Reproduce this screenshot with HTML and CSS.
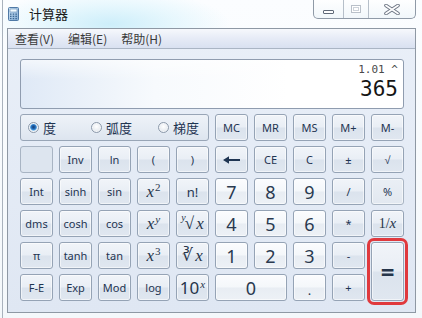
FILE: index.html
```html
<!DOCTYPE html>
<html lang="zh">
<head>
<meta charset="utf-8">
<title>计算器</title>
<link rel="stylesheet" href="styles.css">
</head>
<body>
<div class="window">
  <header class="titlebar">
    <svg class="appicon" width="11" height="14" viewBox="0 0 11 14">
      <defs><linearGradient id="ig" x1="0" y1="0" x2="1" y2="1"><stop offset="0" stop-color="#d9ecfb"/><stop offset="1" stop-color="#7fa9d3"/></linearGradient></defs>
      <rect x="0.5" y="0.5" width="10" height="13" rx="1" fill="url(#ig)" stroke="#4f79a6"/>
      <rect x="2" y="2" width="7" height="3" fill="#f4fbff" stroke="#5f87b1" stroke-width="0.6"/>
      <g fill="#3d6894">
        <rect x="2" y="6.5" width="1.5" height="1.3"/><rect x="4.7" y="6.5" width="1.5" height="1.3"/><rect x="7.4" y="6.5" width="1.5" height="1.3"/>
        <rect x="2" y="8.7" width="1.5" height="1.3"/><rect x="4.7" y="8.7" width="1.5" height="1.3"/><rect x="7.4" y="8.7" width="1.5" height="1.3"/>
        <rect x="2" y="10.9" width="1.5" height="1.3"/><rect x="4.7" y="10.9" width="1.5" height="1.3"/><rect x="7.4" y="10.9" width="1.5" height="1.3"/>
      </g>
    </svg>
    <span class="title">计算器</span>
    <div class="caption">
      <span class="cap cap-min"><i class="glyph-min"></i></span>
      <span class="cap cap-max"><i class="glyph-max"></i></span>
      <span class="cap cap-close">
        <svg width="16" height="11" viewBox="0 0 16 11">
          <path d="M2 1.5 L14 9.5 M14 1.5 L2 9.5" stroke="#6b7482" stroke-width="3.6" stroke-linecap="round"/>
          <path d="M2 1.5 L14 9.5 M14 1.5 L2 9.5" stroke="#fdfdfe" stroke-width="1.8" stroke-linecap="round"/>
        </svg>
      </span>
    </div>
  </header>
  <div class="client">
    <nav class="menubar">
      <span>查看(V)</span><span>编辑(E)</span><span>帮助(H)</span>
    </nav>
    <main class="content">
      <div class="display">
        <div class="expr">1.01 ^</div>
        <div class="value">365</div>
      </div>
      <div class="keypad">
        <div class="radios">
          <label class="radio"><span class="rb on"></span>度</label>
          <label class="radio"><span class="rb"></span>弧度</label>
          <label class="radio"><span class="rb"></span>梯度</label>
        </div>
        <div class="k">MC</div><div class="k">MR</div><div class="k">MS</div><div class="k">M+</div><div class="k">M-</div>

        <div class="k blank"></div><div class="k">Inv</div><div class="k">ln</div><div class="k">(</div><div class="k">)</div>
        <div class="k"><svg width="17" height="8" viewBox="0 0 17 8"><path d="M0 4 L6 0.3 L6 2.9 L17 2.9 L17 5.1 L6 5.1 L6 7.7 Z" fill="#1f3552"/></svg></div>
        <div class="k">CE</div><div class="k">C</div><div class="k">±</div><div class="k">√</div>

        <div class="k">Int</div><div class="k">sinh</div><div class="k">sin</div><div class="k m"><span><i>x</i><sup>2</sup></span></div><div class="k big2">n!</div>
        <div class="k num">7</div><div class="k num">8</div><div class="k num">9</div><div class="k">/</div><div class="k flat">%</div>

        <div class="k">dms</div><div class="k">cosh</div><div class="k">cos</div><div class="k m"><span><i>x</i><sup><i>y</i></sup></span></div><div class="k m"><span><sup class="pre"><i>y</i></sup>√<i class="rx">x</i></span></div>
        <div class="k num">4</div><div class="k num">5</div><div class="k num">6</div><div class="k">*</div><div class="k m small"><span>1/<i>x</i></span></div>

        <div class="k">π</div><div class="k">tanh</div><div class="k">tan</div><div class="k m"><span><i>x</i><sup>3</sup></span></div><div class="k m"><span>∛<i class="rx">x</i></span></div>
        <div class="k num">1</div><div class="k num">2</div><div class="k num">3</div><div class="k">-</div>
        <div class="k eq">=</div>

        <div class="k">F-E</div><div class="k">Exp</div><div class="k">Mod</div><div class="k">log</div><div class="k ten"><span>10<sup><i>x</i></sup></span></div>
        <div class="k num zero">0</div><div class="k num dot">.</div><div class="k">+</div>
      </div>
    </main>
  </div>
</div>
</body>
</html>
```
FILE: styles.css
```css
* { box-sizing: border-box; margin: 0; padding: 0; }
html, body { width: 422px; height: 318px; overflow: hidden; }
body {
  background: #ffffff;
  font-family: "Noto Sans", "Noto Sans CJK SC", sans-serif;
  color: #1f3552;
}

.window {
  width: 422px;
  height: 318px;
  padding: 0 6px 0 7px;
  background:
    linear-gradient(to right, transparent 2px, #a9b2bd 2px, #a9b2bd 3px, transparent 3px),
    radial-gradient(ellipse 120px 34px at 110px 24px, #cdeefa 0%, rgba(215,243,252,0.55) 55%, rgba(255,255,255,0) 100%),
    linear-gradient(#fbfdff, #f4f8fb);
}

/* ---------- title bar ---------- */
.titlebar {
  height: 28px;
  display: flex;
  align-items: flex-start;
}
.appicon { margin: 7px 0 0 1px; flex: none; }
.title {
  margin: 5px 0 0 10px;
  font: 13px/18px "Noto Sans CJK SC", sans-serif;
  color: #1b1b1b;
}
.caption {
  margin-left: auto;
  display: flex;
  height: 19px;
  border: 1px solid #8f9aa7;
  border-top: none;
  border-radius: 0 0 5px 5px;
  background: linear-gradient(rgba(255,255,255,0.7), rgba(240,246,250,0.85));
  overflow: hidden;
}
.cap {
  display: flex;
  align-items: center;
  justify-content: center;
}
.cap-min { width: 29px; }
.cap-max { width: 25px; border-left: 1px solid #b6bfc9; }
.cap-close { width: 47px; border-left: 1px solid #b6bfc9; }
.glyph-min {
  display: block;
  width: 11px;
  height: 4px;
  margin-top: 6px;
  border: 1px solid #5f6977;
  border-radius: 1px;
  background: #fdfdfe;
}
.glyph-max {
  display: block;
  width: 10px;
  height: 8px;
  border: 1px solid #b9c0c9;
  box-shadow: inset 0 0 0 1px #fff, inset 0 0 0 2px #cdd3da;
  background: #fff;
}

/* ---------- client ---------- */
.client {
  height: 285px;
  border: 1px solid #8e98a4;
  background: linear-gradient(#e9eff8, #dfe7f3);
  display: flex;
  flex-direction: column;
}
.menubar {
  height: 20px;
  flex: none;
  display: flex;
  align-items: center;
  gap: 14px;
  padding-left: 7px;
  border-bottom: 1px solid #aab5c4;
  background: linear-gradient(#f6f8fc, #e6ebf6 50%, #d9e1f1);
  font: 12px/16px "Noto Sans CJK SC", sans-serif;
  color: #3a3a3a;
}
.content {
  padding: 10px 11px 11px 12px;
}

.display {
  height: 50px;
  border: 1px solid #8f9caf;
  border-radius: 3px;
  background:
    linear-gradient(rgba(255,255,255,0.6), rgba(255,255,255,0) 40%),
    linear-gradient(to right, #dfe9f6, #f7fafd 35%, #ffffff 70%);
  display: flex;
  flex-direction: column;
  align-items: flex-end;
  padding: 3px 5px 0 0;
}
.expr {
  font: 11px/13px "DejaVu Sans Mono", monospace;
  color: #4a4a4a;
}
.value {
  margin-top: 1px;
  font: 21px/24px "DejaVu Sans Mono", monospace;
  color: #151515;
}

/* ---------- keypad ---------- */
.keypad {
  margin-top: 5px;
  display: grid;
  grid-template-columns: repeat(10, 33px);
  grid-auto-rows: 27px;
  column-gap: 6px;
  row-gap: 5px;
}
.radios {
  grid-column: span 5;
  border: 1px solid #98a5b6;
  border-radius: 3px;
  background: linear-gradient(#eef2f8, #e6ecf4 50%, #dde5ef);
  display: grid;
  grid-template-columns: 63px 67px auto;
  align-items: center;
  padding-left: 7px;
  font: 13px/16px "Noto Sans CJK SC", sans-serif;
  color: #1f3552;
}
.radio { display: flex; align-items: center; gap: 4px; }
.rb {
  width: 11px;
  height: 11px;
  border-radius: 50%;
  border: 1px solid #8c99aa;
  background: radial-gradient(circle at 50% 40%, #ffffff, #d9dfe7);
  box-shadow: inset 0 0 0 1px #f4f6f9;
}
.rb.on {
  background: radial-gradient(circle at 50% 45%, #163f74 0, #1f5fa8 1.6px, #3d8fd8 2.8px, #9fcdf1 3.6px, #eef3f8 4.2px, #ffffff 100%);
}

.k {
  border: 1px solid #95a3b5;
  border-radius: 3px;
  background: linear-gradient(#f1f4f9 0%, #e9eef5 48%, #dbe3ed 52%, #e0e7f0 100%);
  box-shadow: inset 0 0 0 1px rgba(255,255,255,0.55);
  display: flex;
  align-items: center;
  justify-content: center;
  font: 11px/14px "Noto Sans", sans-serif;
  color: #1f3552;
  white-space: nowrap;
}
.k.blank {
  background: #dde5ef;
  border-color: #a8b4c3;
  box-shadow: none;
}
.k.flat {
  background: linear-gradient(#eaeff5, #e2e8f0);
  border-color: #a9b5c3;
}
.k.num {
  background: linear-gradient(#fbfcfe 0%, #f4f7fa 48%, #e8edf3 52%, #edf1f6 100%);
  font: 18px/22px "Noto Sans", sans-serif;
  color: #2a3a50;
}
.k.dot { font-size: 13px; padding-top: 4px; }
.k.big2 { font-size: 13px; }
.k.m {
  font: 17px/20px "Liberation Serif", serif;
  color: #26354a;
}
.k.m i { font-style: italic; }
.k.m i.rx { margin-left: 2px; }
.k.m sup {
  font-size: 11px;
  line-height: 0;
  vertical-align: 6px;
  margin-left: 1px;
}
.k.m sup.pre { font-size: 10px; margin: 0 -1px 0 0; vertical-align: 8px; }
.k.m.small { font-size: 14px; }
.k.m.small i { font-size: 15px; }
.k.ten { font: 17px/22px "Noto Sans", sans-serif; color: #26354a; }
.k.ten sup {
  font: italic 11px/0 "Liberation Serif", serif;
  vertical-align: 6px;
  margin-left: 1px;
}
.k.eq {
  grid-row: span 2;
  font: 700 24px/26px "Noto Sans", sans-serif;
  color: #26354a;
  outline: 3px solid #e0393d;
  outline-offset: 1px;
}
.k.zero { grid-column: span 2; }
```
